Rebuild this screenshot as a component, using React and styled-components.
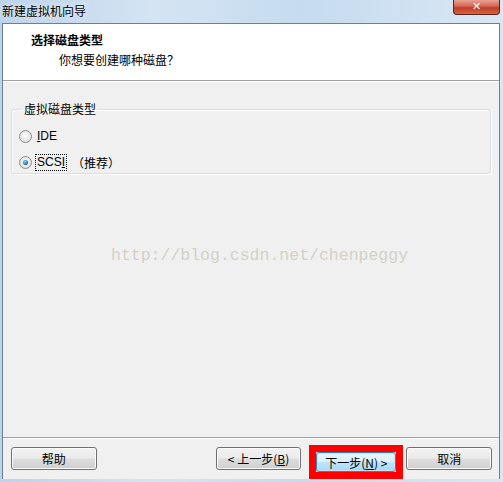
import React from 'react';
import styled, { createGlobalStyle } from 'styled-components';

const GlobalStyle = createGlobalStyle`
  html, body {
    margin: 0;
    padding: 0;
  }
  body {
    font-family: "Noto Sans CJK SC", "Liberation Sans", sans-serif;
    font-size: 12px;
    color: #000;
  }
`;

const Window = styled.div`
  width: 503px;
  height: 482px;
  display: flex;
  flex-direction: column;
  overflow: hidden;
  background: linear-gradient(90deg, #bcd3ea 0%, #d4e4f3 30%, #c6dbef 60%, #d9e7f4 100%);
`;

const TitleBar = styled.div`
  height: 23px;
  flex: none;
  display: flex;
  align-items: flex-start;
  justify-content: space-between;
  padding-left: 2px;
`;

const TitleText = styled.span`
  font-size: 12px;
  line-height: 22px;
  color: #000;
  text-shadow: 0 0 6px #fff;
`;

const CloseButton = styled.div`
  width: 45px;
  height: 14px;
  margin-right: 3px;
  border: 1px solid #5a2320;
  border-top: none;
  border-radius: 0 0 4px 4px;
  background: linear-gradient(#e8a094 0%, #d56554 45%, #c23b26 55%, #d2673e 100%);
  display: flex;
  align-items: center;
  justify-content: center;
  color: #fff;
  font-family: "DejaVu Sans", sans-serif;
  font-weight: bold;
  font-size: 11px;
  line-height: 14px;
`;

const Client = styled.div`
  flex: 1;
  display: flex;
  flex-direction: column;
  margin: 0 3px 3px 2px;
  border: 1px solid #6d7f93;
  border-bottom: none;
  background: #f0f0f0;
`;

const Header = styled.div`
  height: 57px;
  flex: none;
  background: #fff;
  border-bottom: 1px solid #a0a0a0;
  box-shadow: 0 1px 0 #fff;
  padding: 6px 0 0 28px;
  box-sizing: border-box;
`;

const HeaderTitle = styled.div`
  font-weight: bold;
  font-size: 12px;
  line-height: 20px;
`;

const HeaderSub = styled.div`
  font-size: 12px;
  line-height: 20px;
  padding-left: 28px;
`;

const Body = styled.div`
  flex: 1;
  display: flex;
  flex-direction: column;
  padding: 21px 8px 0 8px;
`;

const GroupBox = styled.fieldset`
  margin: 0;
  padding: 7px 0 10px 7px;
  height: 72px;
  box-sizing: border-box;
  border: 1px solid #d5dfe5;
  border-radius: 3px;
  box-shadow: inset 1px 1px 0 #fff, 1px 1px 0 #fff;
`;

const Legend = styled.legend`
  padding: 0 2px;
  margin-left: 3px;
  font-size: 12px;
  line-height: 14px;
`;

const RadioRow = styled.label`
  display: flex;
  align-items: center;
  gap: 4px;
  height: 26px;
`;

const RadioDot = styled.span`
  width: 11px;
  height: 11px;
  border-radius: 50%;
  border: 1px solid #8e8f8f;
  background: radial-gradient(circle at 50% 45%, #fff 0%, #e6e6e6 60%, #c8c8c8 100%);
  display: flex;
  align-items: center;
  justify-content: center;
  flex: none;

  &::after {
    content: '';
    display: ${p => (p.$checked ? 'block' : 'none')};
    width: 5px;
    height: 5px;
    border-radius: 50%;
    background: radial-gradient(circle at 40% 35%, #8fd2f7 0%, #1d76b4 60%, #0c4a80 100%);
  }
`;

const RadioLabel = styled.span`
  font-family: "Liberation Sans", "Noto Sans CJK SC", sans-serif;
  font-size: 12px;
  line-height: 15px;
  padding: 0 1px;
  outline: ${p => (p.$focused ? '1px dotted #000' : 'none')};
`;

const Hint = styled.span`
  font-size: 12px;
  margin-left: 2px;
`;

const Watermark = styled.div`
  margin-top: 72px;
  padding-left: 100px;
  font-family: "Liberation Mono", monospace;
  font-size: 16.5px;
  line-height: 20px;
  color: #d3d1c8;
`;

const Footer = styled.div`
  height: 41px;
  flex: none;
  border-top: 1px solid #a0a0a0;
  box-shadow: inset 0 1px 0 #fff;
  display: flex;
  align-items: center;
  padding: 0 7px 0 8px;
  margin-top: auto;
`;

const Button = styled.button`
  width: 86px;
  height: 23px;
  padding: 0;
  box-sizing: border-box;
  border: 1px solid #707070;
  border-radius: 3px;
  background: linear-gradient(#f2f2f2 0%, #ebebeb 48%, #dddddd 52%, #cfcfcf 100%);
  box-shadow: inset 0 0 0 1px #fcfcfc;
  font-family: "Noto Sans CJK SC", "Liberation Sans", sans-serif;
  font-size: 12px;
  color: #000;
  margin-left: ${p => p.$gap || 0}px;
`;

const DefaultButton = styled(Button)`
  width: 80px;
  height: 20px;
  border: 1px solid #3c7fb1;
  background: linear-gradient(#eaf6fd 0%, #d9f0fc 48%, #bee6fd 52%, #a7d9f5 100%);
  box-shadow: inset 0 0 0 1px #c0e5f8;
`;

const Highlight = styled.div`
  margin-left: 8px;
  padding: 7px;
  margin-bottom: -7px;
  background: #f0f0f0;
  outline: 7px solid #ff0000;
  outline-offset: -7px;
  display: flex;
`;

const Key = styled.u`
  text-decoration: underline;
`;

export default function App() {
  return (
    <>
      <GlobalStyle />
      <Window>
        <TitleBar>
          <TitleText>新建虚拟机向导</TitleText>
          <CloseButton>✕</CloseButton>
        </TitleBar>
        <Client>
          <Header>
            <HeaderTitle>选择磁盘类型</HeaderTitle>
            <HeaderSub>你想要创建哪种磁盘？</HeaderSub>
          </Header>
          <Body>
            <GroupBox>
              <Legend>虚拟磁盘类型</Legend>
              <RadioRow>
                <RadioDot />
                <RadioLabel><Key>I</Key>DE</RadioLabel>
              </RadioRow>
              <RadioRow>
                <RadioDot $checked />
                <RadioLabel $focused>SCS<Key>I</Key></RadioLabel>
                <Hint>（推荐）</Hint>
              </RadioRow>
            </GroupBox>
            <Watermark>http://blog.csdn.net/chenpeggy</Watermark>
          </Body>
          <Footer>
            <Button>帮助</Button>
            <Button $gap={119}>&lt; 上一步(<Key>B</Key>)</Button>
            <Highlight>
              <DefaultButton>下一步(<Key>N</Key>) &gt;</DefaultButton>
            </Highlight>
            <Button $gap={3}>取消</Button>
          </Footer>
        </Client>
      </Window>
    </>
  );
}
